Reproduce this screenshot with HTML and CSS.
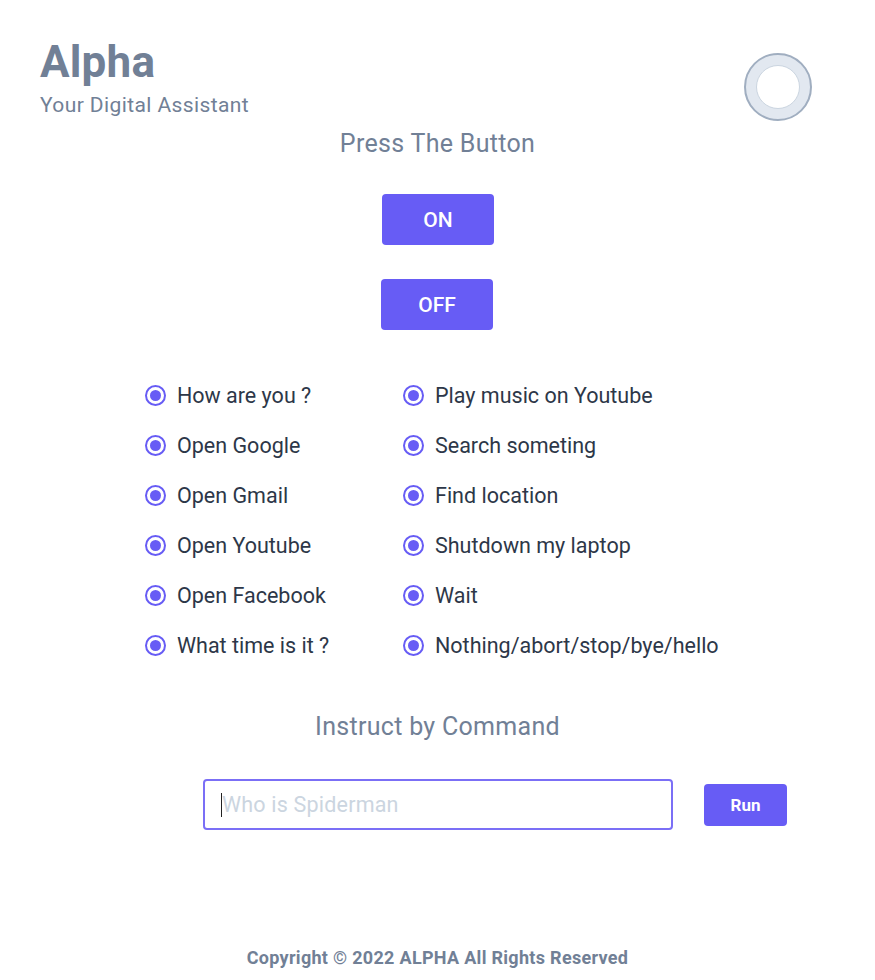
FILE: index.html
```html
<!DOCTYPE html>
<html>
<head>
<meta charset="utf-8">
<link rel="stylesheet" href="styles.css">
</head>
<body>
<div class="page">
  <header class="header">
    <div class="brand">
      <h1 class="title">Alpha</h1>
      <p class="subtitle">Your Digital Assistant</p>
    </div>
    <div class="orb"><div class="orb-inner"></div></div>
  </header>

  <h2 class="section-title press">Press The Button</h2>
  <div class="buttons">
    <button class="btn btn-on">ON</button>
    <button class="btn btn-off">OFF</button>
  </div>

  <div class="commands">
    <ul class="col">
      <li><span class="radio"></span>How are you ?</li>
      <li><span class="radio"></span>Open Google</li>
      <li><span class="radio"></span>Open Gmail</li>
      <li><span class="radio"></span>Open Youtube</li>
      <li><span class="radio"></span>Open Facebook</li>
      <li><span class="radio"></span>What time is it ?</li>
    </ul>
    <ul class="col">
      <li><span class="radio"></span>Play music on Youtube</li>
      <li><span class="radio"></span>Search someting</li>
      <li><span class="radio"></span>Find location</li>
      <li><span class="radio"></span>Shutdown my laptop</li>
      <li><span class="radio"></span>Wait</li>
      <li><span class="radio"></span>Nothing/abort/stop/bye/hello</li>
    </ul>
  </div>

  <h2 class="section-title instruct">Instruct by Command</h2>
  <div class="command-row">
    <div class="input"><span class="caret"></span><span class="placeholder">Who is Spiderman</span></div>
    <button class="run">Run</button>
  </div>

  <footer class="footer">Copyright © 2022 ALPHA All Rights Reserved</footer>
</div>
</body>
</html>
```

FILE: styles.css
```css
* { box-sizing: border-box; }
html, body { margin: 0; padding: 0; background: #fff; }
body { font-family: Roboto, "Liberation Sans", sans-serif; color: #718096; }
.page { width: 875px; height: 980px; display: flex; flex-direction: column; }

.header { display: flex; justify-content: space-between; padding: 38px 63px 0 40px; height: 124px; }
.title { margin: 0; font-size: 44px; font-weight: 700; line-height: 48px; color: #718096; letter-spacing: 0.2px; }
.subtitle { margin: 7px 0 0 0; font-size: 21px; line-height: 24px; color: #718096; letter-spacing: 0.4px; }
.orb { margin-top: 15px; width: 68px; height: 68px; border-radius: 50%; border: 2px solid #a0aec0; background: #e2e8f0; display: flex; align-items: center; justify-content: center; }
.orb-inner { width: 44px; height: 44px; border-radius: 50%; background: #fff; border: 1.5px solid #cbd5e0; }

.section-title { margin: 0; font-weight: 400; font-size: 25px; line-height: 28px; text-align: center; color: #718096; letter-spacing: 0.3px; }
.press { margin-top: 6px; }

.buttons { display: flex; flex-direction: column; align-items: center; gap: 34px; margin-top: 36px; }
.btn { width: 112px; height: 51px; border: 0; border-radius: 4px; background: #675cf5; color: #fff; font-family: Roboto, sans-serif; font-size: 21px; font-weight: 500; }
.btn-on { margin-left: 1px; }
.btn-off { margin-left: -1px; }

.commands { display: flex; margin: 53px 0 0 145px; gap: 0; }
.col { list-style: none; margin: 0; padding: 0; display: flex; flex-direction: column; gap: 26px; }
.col:first-child { width: 258px; }
.col li { display: flex; align-items: center; height: 24px; font-size: 21.5px; color: #2d3748; }
.radio { width: 21px; height: 21px; border-radius: 50%; border: 2.5px solid #675cf5; background: #fff; margin-right: 11px; display: flex; align-items: center; justify-content: center; flex: none; }
.radio::after { content: ""; width: 11px; height: 11px; border-radius: 50%; background: #675cf5; }

.instruct { margin-top: 56px; }

.command-row { display: flex; align-items: center; margin: 38px 0 0 203px; gap: 31px; }
.input { width: 470px; height: 51px; border: 2px solid #7b6ff6; border-radius: 4px; display: flex; align-items: center; padding-left: 16px; }
.caret { width: 1px; height: 24px; background: #222; margin-right: 0; }
.placeholder { font-size: 21.5px; color: #cbd5e0; letter-spacing: 0.2px; }
.run { width: 83px; height: 42px; border: 0; border-radius: 4px; background: #675cf5; color: #fff; font-family: Roboto, sans-serif; font-size: 17px; font-weight: 700; }

.footer { margin-top: auto; margin-bottom: 12px; text-align: center; font-size: 18px; font-weight: 700; color: #718096; letter-spacing: 0.3px; }
```
